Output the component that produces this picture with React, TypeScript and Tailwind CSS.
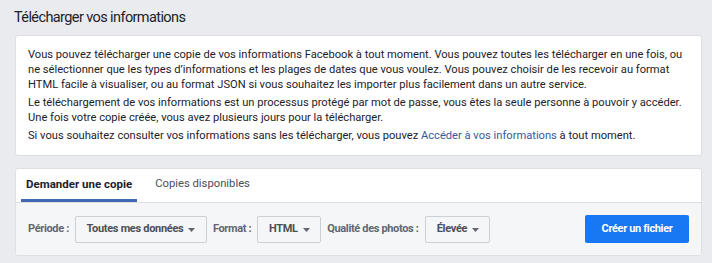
import React from "react";

const font = { fontFamily: 'Roboto, "Liberation Sans", Arial, sans-serif' };

function Caret() {
  return (
    <svg width="7" height="4" viewBox="0 0 7 4" className="ml-[5px] mt-[1px]">
      <path d="M0 0 L7 0 L3.5 4 Z" fill="#606770" />
    </svg>
  );
}

function Dropdown({ label, className }: { label: string; className: string }) {
  return (
    <div
      className={`flex h-[27px] items-center justify-center rounded-[2px] border border-[#ccd0d5] bg-[#f5f6f7] text-[11px] font-bold tracking-[-0.3px] text-[#4b4f56] ${className}`}
    >
      {label}
      <Caret />
    </div>
  );
}

export default function App() {
  return (
    <div
      className="h-[263px] w-[712px] overflow-hidden bg-[#e9ebee] pl-[15px] pr-[10px] text-[#1d2129]"
      style={font}
    >
      {/* Title */}
      <h1 className="-ml-px pt-[8px] text-[14.5px] leading-[20px] tracking-[-0.6px]">Télécharger vos informations</h1>

      {/* Info card */}
      <div className="mt-[7px] whitespace-nowrap rounded-[3px] border border-[#dddfe2] bg-white px-[12px] pb-[12px] pt-[11px] text-[11.15px] leading-[15px]">
        <p>
          Vous pouvez télécharger une copie de vos informations Facebook à tout moment. Vous pouvez toutes les télécharger en une fois, ou
          <br />
          ne sélectionner que les types d’informations et les plages de dates que vous voulez. Vous pouvez choisir de les recevoir au format
          <br />
          HTML facile à visualiser, ou au format JSON si vous souhaitez les importer plus facilement dans un autre service.
        </p>
        <p className="mt-[3px]">
          Le téléchargement de vos informations est un processus protégé par mot de passe, vous êtes la seule personne à pouvoir y accéder.
          <br />
          Une fois votre copie créée, vous avez plusieurs jours pour la télécharger.
        </p>
        <p className="mt-[3px]">
          Si vous souhaitez consulter vos informations sans les télécharger, vous pouvez{" "}
          <span className="text-[#385898]">Accéder à vos informations</span> à tout moment.
        </p>
      </div>

      {/* Download card */}
      <div className="mt-[12px] overflow-hidden rounded-[3px] border border-[#dddfe2] bg-white">
        <div className="flex h-[34px] items-stretch border-b border-[#dddfe2] pl-[5px]">
          <div className="flex flex-col justify-end">
            <div className="flex flex-1 items-center px-[5px] pt-[1px] text-[11.5px] font-bold text-[#1d2129]">
              Demander une copie
            </div>
            <div className="h-[3px] bg-[#4267b2]" />
          </div>
          <div className="ml-[18px] flex items-center pb-[2px] text-[11.25px] text-[#4b4f56]">Copies disponibles</div>
        </div>
        <div className="flex h-[52px] items-center whitespace-nowrap bg-[#f5f6f7] pl-[12px] pr-[12px] text-[11px] font-bold tracking-[-0.35px]">
          <span className="mr-[6px] text-[#606770]">Période :</span>
          <Dropdown label="Toutes mes données" className="w-[132px]" />
          <span className="mx-[6px] text-[#606770]">Format :</span>
          <Dropdown label="HTML" className="w-[64px]" />
          <span className="ml-[6px] mr-[7px] text-[#606770]">Qualité des photos :</span>
          <Dropdown label="Élevée" className="w-[65px]" />
          <button className="ml-auto h-[28px] w-[104px] rounded-[2px] bg-[#1877f2] font-bold text-white">
            Créer un fichier
          </button>
        </div>
      </div>
    </div>
  );
}
